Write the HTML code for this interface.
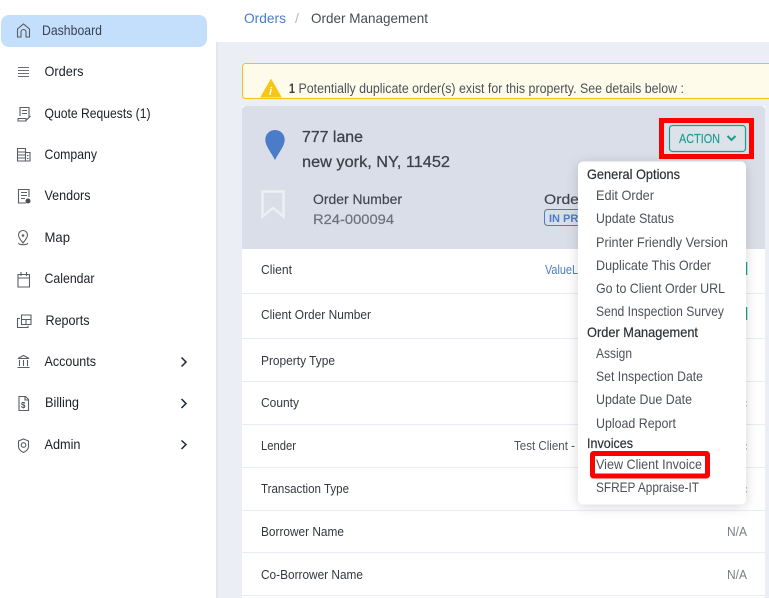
<!DOCTYPE html>
<html lang="en"><head><meta charset="utf-8"><title>Order Management</title>
<style>
html,body{margin:0;padding:0;width:769px;height:598px;overflow:hidden;background:#eceef5}
svg{display:block}
text{font-family:"Liberation Sans",sans-serif;font-size:14px;fill:#3f4650}
.nav{fill:#1b2028;font-size:14px}
.m{fill:#4c5159;font-size:14px}
.h{fill:#2b3037;font-size:14px;stroke:#2b3037;stroke-width:.2px}
.r{fill:#33383f;font-size:13px}
.ic{fill:none;stroke:#5a5d63;stroke-width:1.1}
</style></head><body>
<svg width="769" height="598" viewBox="0 0 769 598" xmlns="http://www.w3.org/2000/svg">
<defs>
<filter id="s" x="-20%" y="-10%" width="140%" height="120%"><feDropShadow dx="0" dy="2" stdDeviation="6" flood-color="#000" flood-opacity=".16"/></filter>
</defs>
<rect width="769" height="598" fill="#eceef5"/>
<!-- header -->
<rect x="216" y="0" width="553" height="42" fill="#fff"/>
<text x="244" y="23" textLength="42" lengthAdjust="spacingAndGlyphs" style="fill:#4a7cc7">Orders</text>
<text x="295" y="23" style="fill:#b5b8be">/</text>
<text x="311" y="23" textLength="117" lengthAdjust="spacingAndGlyphs" style="fill:#474c54">Order Management</text>
<!-- sidebar -->
<rect x="216" y="42" width="2" height="556" fill="#e4e6ec"/>
<rect x="0" y="0" width="216" height="598" fill="#fff"/>
<rect x="1" y="15" width="206" height="32" rx="8" fill="#c3dffb"/>
<text class="nav" x="42" y="35" textLength="60" lengthAdjust="spacingAndGlyphs" style="fill:#3a4356">Dashboard</text>
<text class="nav" x="44.5" y="76" textLength="39" lengthAdjust="spacingAndGlyphs">Orders</text>
<text class="nav" x="44.5" y="118" textLength="106" lengthAdjust="spacingAndGlyphs">Quote Requests (1)</text>
<text class="nav" x="44.5" y="159" textLength="52.5" lengthAdjust="spacingAndGlyphs">Company</text>
<text class="nav" x="44.5" y="200" textLength="46" lengthAdjust="spacingAndGlyphs">Vendors</text>
<text class="nav" x="44.5" y="242" textLength="25.5" lengthAdjust="spacingAndGlyphs">Map</text>
<text class="nav" x="44.5" y="283" textLength="50" lengthAdjust="spacingAndGlyphs">Calendar</text>
<text class="nav" x="45.5" y="325" textLength="44" lengthAdjust="spacingAndGlyphs">Reports</text>
<text class="nav" x="44.5" y="366" textLength="51.5" lengthAdjust="spacingAndGlyphs">Accounts</text>
<text class="nav" x="45" y="407" textLength="34" lengthAdjust="spacingAndGlyphs">Billing</text>
<text class="nav" x="44.5" y="449" textLength="36" lengthAdjust="spacingAndGlyphs">Admin</text>
<!-- sidebar icons -->
<path class="ic" d="M17.5 37v-8l6-5 6 5v8h-3.500v-5a2.500 2.500 0 0 0-5 0v5z"/>
<path d="M18 67.500h11M18 70.500h11M18 73.500h11M18 76.500h11" fill="none" stroke="#6a6d73" stroke-width="1"/>
<path class="ic" d="M20 116v-8.500h9V118M22 110.500h5M22 113.500h5M18 118.500h8v2.500h-8zM26 120.500l4.500-4.500"/>
<path class="ic" d="M17.500 161v-12.500h8V161zM25.500 152.500h4.500V161h-4.500M17.500 152h8M17.500 155h8M17.500 158h8M27 155.500h1.500M27 158.500h1.500"/>
<path class="ic" d="M26 203h-7.500v-13.500h10.500V197M21 192.500h6M21 195.500h6M21 198.500h4"/>
<circle cx="28" cy="201" r="2.500" fill="#4a4d52"/>
<path class="ic" d="M23 243c-2.500-3-4.500-5.500-4.500-8a4.500 4.500 0 0 1 9 0c0 2.500-2 5-4.500 8zM19 243c-2 2.200 10 2.200 8.500 0"/>
<circle cx="23" cy="235.500" r="1.300" fill="#5a5d63"/>
<path class="ic" d="M18 274.500h11.500V287H18zM18 278h11.500M21 272v4M26.500 272v4"/>
<path class="ic" d="M21.500 315h9.500v9.500h-9.500zM21.500 319.500h9.500M26 319.500v5M20 318.500h-2.500v9H28V326"/>
<path class="ic" d="M18 358.500l5.500-3 5.500 3zM19.500 366v-6M23.500 366v-6M27.500 366v-6M17.500 367.500h12"/>
<path class="ic" d="M19 396.500h6.500l3 3v11H19zM25 396.500v3.500h3.500"/>
<text x="21" y="408" style="font-size:8px;fill:#4a4d52;font-weight:bold">$</text>
<path class="ic" d="M23.500 439l5 2v5.500c0 2.500-2 4.500-5 6-3-1.500-5-3.500-5-6V441z"/>
<circle class="ic" cx="23.500" cy="445" r="2.300"/>
<path d="M181.500 357.500l4.500 4.500-4.500 4.500M181.500 399l4.500 4.500-4.500 4.500M181.500 440.500l4.500 4-4.500 4.500" fill="none" stroke="#1f2530" stroke-width="1.500"/>
<!-- alert -->
<rect x="242.500" y="63.500" width="535" height="35" rx="3" fill="#fffbea" stroke="#f2c21a"/>
<path d="M271 79.500l10 17.500h-20z" fill="#f5c518" stroke="#f5c518" stroke-linejoin="round"/>
<text x="269" y="95" style="font-size:11px;font-style:italic;font-weight:bold;fill:#fff">i</text>
<text x="289" y="93" style="font-size:13.500px;fill:#3a3f47;font-weight:bold" textLength="6" lengthAdjust="spacingAndGlyphs">1</text>
<text x="298.500" y="93" textLength="385.500" lengthAdjust="spacingAndGlyphs" style="font-size:13.500px;fill:#4c5159">Potentially duplicate order(s) exist for this property. See details below :</text>
<!-- card -->
<rect x="242" y="106" width="523" height="492" fill="#fff"/>
<path d="M242 249V110a4 4 0 0 1 4-4h515a4 4 0 0 1 4 4v139z" fill="#dadee8"/>
<path d="M275 130c-5.500 0-9.700 4.300-9.700 9.700 0 6.500 6.500 13.500 9.700 20.300 3.200-6.800 9.700-13.800 9.700-20.300 0-5.400-4.200-9.700-9.700-9.700z" fill="#4a7cc7"/>
<text x="302" y="142" textLength="61" lengthAdjust="spacingAndGlyphs" style="font-size:15.500px;fill:#3c414a;stroke:#3c414a;stroke-width:.25px">777 lane</text>
<text x="302" y="167" textLength="148" lengthAdjust="spacingAndGlyphs" style="font-size:15.500px;fill:#3c414a;stroke:#3c414a;stroke-width:.25px">new york, NY, 11452</text>
<path d="M262.500 191.500h21v25l-10.500-8.500-10.500 8.500z" fill="none" stroke="#eceff5" stroke-width="2.500"/>
<text x="313" y="204" textLength="89" lengthAdjust="spacingAndGlyphs" style="fill:#3f444d;stroke:#3f444d;stroke-width:.15px">Order Number</text>
<text x="313" y="224" textLength="81" lengthAdjust="spacingAndGlyphs" style="fill:#6d727b;stroke:#6d727b;stroke-width:.2px">R24-000094</text>
<text x="544" y="204" textLength="89" lengthAdjust="spacingAndGlyphs" style="fill:#3f444d;stroke:#3f444d;stroke-width:.15px">Order Status</text>
<rect x="544.500" y="209.500" width="70" height="16" rx="3" fill="none" stroke="#4a7cc7"/>
<text x="549" y="222" style="font-size:11px;font-weight:bold;fill:#4a7cc7">IN PROGRESS</text>
<!-- rows -->
<path d="M242 293.500h523M242 338.500h523M242 381.500h523M242 424.500h523M242 467.500h523M242 510.500h523M242 552.500h523M242 595.500h523" stroke="#e8edf3" stroke-width="1"/>
<text class="r" x="261" y="274" textLength="31" lengthAdjust="spacingAndGlyphs">Client</text>
<text class="r" x="261" y="319" textLength="110" lengthAdjust="spacingAndGlyphs">Client Order Number</text>
<text class="r" x="261" y="365" textLength="74" lengthAdjust="spacingAndGlyphs">Property Type</text>
<text class="r" x="261" y="407" textLength="38" lengthAdjust="spacingAndGlyphs">County</text>
<text class="r" x="261" y="450" textLength="35" lengthAdjust="spacingAndGlyphs">Lender</text>
<text class="r" x="261" y="493" textLength="88" lengthAdjust="spacingAndGlyphs">Transaction Type</text>
<text class="r" x="261" y="536" textLength="83" lengthAdjust="spacingAndGlyphs">Borrower Name</text>
<text class="r" x="261" y="579" textLength="102" lengthAdjust="spacingAndGlyphs">Co-Borrower Name</text>
<text x="545" y="274" textLength="33" lengthAdjust="spacingAndGlyphs" style="font-size:13px;fill:#4a7cc7">ValueL</text>
<text x="514" y="450" textLength="61" lengthAdjust="spacingAndGlyphs" style="font-size:13px;fill:#50555e">Test Client -</text>
<text x="727" y="536" textLength="20" lengthAdjust="spacingAndGlyphs" style="font-size:13px;fill:#7a7e85">N/A</text>
<text x="727" y="579" textLength="20" lengthAdjust="spacingAndGlyphs" style="font-size:13px;fill:#7a7e85">N/A</text>
<path d="M746.500 262v13M746.500 307v13" stroke="#1a9d8f" stroke-width="1.500"/>
<path d="M746.500 401v1.500M746.500 405v1.500M746.500 444v1.500M746.500 448v1.500M746.500 487v1.500M746.500 491v1.500" stroke="#b9bcc2" stroke-width="1"/>
<!-- action button -->
<rect x="661.500" y="120.500" width="90" height="36" fill="none" stroke="#ff0000" stroke-width="5"/>
<rect x="669.500" y="125.500" width="76" height="26" rx="3" fill="#dde1ea" stroke="#1a9d8f" stroke-width="1.200"/>
<text x="679" y="143" textLength="41" lengthAdjust="spacingAndGlyphs" style="font-size:12.500px;fill:#1a9d8f;stroke:#1a9d8f;stroke-width:.15px">ACTION</text>
<path d="M727.500 136l4 4 4-4" fill="none" stroke="#1a9d8f" stroke-width="2"/>
<!-- dropdown -->
<rect x="578" y="161.500" width="168" height="343" rx="5" fill="#fff" filter="url(#s)"/>
<text class="h" x="587" y="179" textLength="93" lengthAdjust="spacingAndGlyphs">General Options</text>
<text class="m" x="596" y="200" textLength="58" lengthAdjust="spacingAndGlyphs">Edit Order</text>
<text class="m" x="596" y="223" textLength="78" lengthAdjust="spacingAndGlyphs">Update Status</text>
<text class="m" x="596" y="247" textLength="132" lengthAdjust="spacingAndGlyphs">Printer Friendly Version</text>
<text class="m" x="596" y="270" textLength="115" lengthAdjust="spacingAndGlyphs">Duplicate This Order</text>
<text class="m" x="596" y="293" textLength="129" lengthAdjust="spacingAndGlyphs">Go to Client Order URL</text>
<text class="m" x="596" y="316" textLength="128" lengthAdjust="spacingAndGlyphs">Send Inspection Survey</text>
<text class="h" x="587" y="337" textLength="111" lengthAdjust="spacingAndGlyphs">Order Management</text>
<text class="m" x="596" y="358" textLength="36" lengthAdjust="spacingAndGlyphs">Assign</text>
<text class="m" x="596" y="381" textLength="107" lengthAdjust="spacingAndGlyphs">Set Inspection Date</text>
<text class="m" x="596" y="404" textLength="96" lengthAdjust="spacingAndGlyphs">Update Due Date</text>
<text class="m" x="596" y="428" textLength="80" lengthAdjust="spacingAndGlyphs">Upload Report</text>
<text class="h" x="587" y="448" textLength="46" lengthAdjust="spacingAndGlyphs">Invoices</text>
<rect x="592.500" y="453.500" width="115" height="22.500" rx="1" fill="#fff" stroke="#ff0000" stroke-width="5"/>
<text class="m" x="596" y="469" textLength="106" lengthAdjust="spacingAndGlyphs">View Client Invoice</text>
<text class="m" x="596" y="492" textLength="103" lengthAdjust="spacingAndGlyphs">SFREP Appraise-IT</text>
</svg>
</body></html>
